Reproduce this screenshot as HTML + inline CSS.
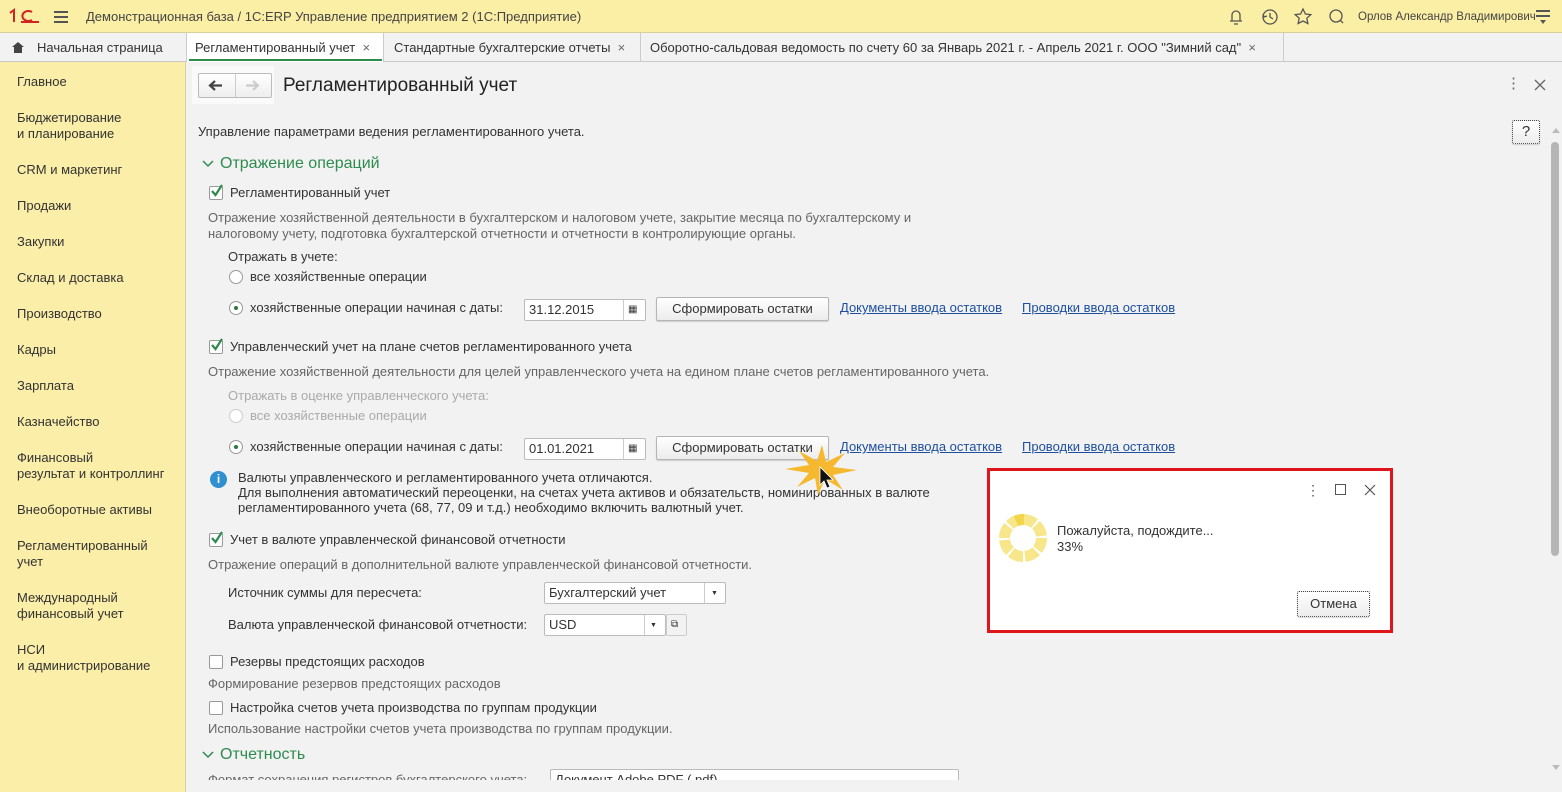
<!DOCTYPE html>
<html><head><meta charset="utf-8"><style>
*{margin:0;padding:0;box-sizing:border-box}
body{width:1562px;height:792px;overflow:hidden;position:relative;background:#f2f2f2;font-family:"Liberation Sans",Arial,sans-serif;font-size:13px;color:#333}
.a{position:absolute;white-space:nowrap;line-height:16px}
.g{color:#666}
.d{color:#aaa}
.l{color:#1d4f9e;text-decoration:underline}
.cb{position:absolute;width:14px;height:14px;border:1px solid #999;background:#fff;border-radius:2px}
.ck{position:absolute}
.rb{position:absolute;width:14px;height:14px;border:1px solid #999;border-radius:50%;background:#fff}
.rb.on:after{content:"";position:absolute;left:4px;top:4px;width:4px;height:4px;border-radius:50%;background:#2a7a3a}
.btn{position:absolute;background:linear-gradient(#fff,#ececec);border:1px solid #b5b5b5;border-radius:2px;box-shadow:0 1px 1px rgba(0,0,0,.15);text-align:center;line-height:22px;color:#333}
.inp{position:absolute;background:#fff;border:1px solid #bbb;border-radius:2px;height:22px;line-height:20px;padding-left:4px}
.side div{position:absolute;left:17px;line-height:16px;color:#333}
</style></head><body>
<!-- top bar -->
<div style="position:absolute;left:0;top:0;width:1562px;height:33px;background:#fbeea5;border-bottom:1px solid #d8cf9a"></div>
<svg style="position:absolute;left:8px;top:8px" width="32" height="16" fill="none" stroke="#d2231f" stroke-width="2"><path d="M2 5l4-3v12"/><path d="M24 4a6 5 0 1 0 0 8"/><path d="M13 14h18"/></svg>
<div style="position:absolute;left:54px;top:11px;width:14px;height:2px;background:#555;box-shadow:0 5px 0 #555,0 10px 0 #555"></div>
<div class="a" style="left:86px;top:9px;color:#444">Демонстрационная база / 1С:ERP Управление предприятием 2  (1С:Предприятие)</div>
<svg style="position:absolute;left:1225px;top:6px" width="120" height="22" fill="none" stroke="#555" stroke-width="1.3">
<path d="M5 15h12M7 15V9a4 4 0 0 1 8 0v6M9 18h4"/>
<circle cx="45" cy="11" r="7"/><path d="M45 7v4l3 2M38 8l1 3 3-1"/>
<path d="M78 3l2.4 5 5.4.6-4 3.6 1.1 5.3L78 15l-4.9 2.5 1.1-5.3-4-3.6 5.4-.6z"/>
<circle cx="111" cy="10" r="6"/><path d="M115 14l3 3"/>
</svg>
<div class="a" style="left:1358px;top:9px;font-size:11.5px;color:#444">Орлов Александр Владимирович</div>
<div style="position:absolute;left:1536px;top:10px;width:14px;height:1.5px;background:#555;box-shadow:0 5px 0 #555"></div>
<div style="position:absolute;left:1540px;top:20px;border:3px solid transparent;border-top:4px solid #555"></div>
<!-- tabs -->
<div style="position:absolute;left:0;top:33px;width:1562px;height:29px;background:#f2f2f2;border-bottom:1px solid #c8c8c8"></div>
<div style="position:absolute;left:12px;top:42px;border:6px solid transparent;border-bottom:5px solid #444;border-top:0"></div>
<div style="position:absolute;left:14px;top:47px;width:8px;height:6px;background:#444"></div>
<div class="a" style="left:37px;top:40px">Начальная страница</div>
<div style="position:absolute;left:186px;top:33px;width:198px;height:29px;background:#fff;border-left:1px solid #ccc;border-right:1px solid #ccc"></div>
<div style="position:absolute;left:189px;top:59px;width:193px;height:2px;background:#2e8b4e"></div>
<div class="a" style="left:195px;top:40px">Регламентированный учет <span style="color:#666">&nbsp;×</span></div>
<div class="a" style="left:394px;top:40px">Стандартные бухгалтерские отчеты <span style="color:#666">&nbsp;×</span></div>
<div style="position:absolute;left:640px;top:33px;width:1px;height:29px;background:#ccc"></div>
<div class="a" style="left:650px;top:40px">Оборотно-сальдовая ведомость по счету 60 за Январь 2021 г. - Апрель 2021 г. ООО "Зимний сад" <span style="color:#666">&nbsp;×</span></div>
<div style="position:absolute;left:1283px;top:33px;width:1px;height:29px;background:#ccc"></div>
<!-- sidebar -->
<div class="side" style="position:absolute;left:0;top:62px;width:186px;height:730px;background:#fbeea8;border-right:1px solid #d9d0a0">
<div style="top:12px">Главное</div>
<div style="top:48px">Бюджетирование<br>и планирование</div>
<div style="top:100px">CRM и маркетинг</div>
<div style="top:136px">Продажи</div>
<div style="top:172px">Закупки</div>
<div style="top:208px">Склад и доставка</div>
<div style="top:244px">Производство</div>
<div style="top:280px">Кадры</div>
<div style="top:316px">Зарплата</div>
<div style="top:352px">Казначейство</div>
<div style="top:388px">Финансовый<br>результат и контроллинг</div>
<div style="top:440px">Внеоборотные активы</div>
<div style="top:476px">Регламентированный<br>учет</div>
<div style="top:528px">Международный<br>финансовый учет</div>
<div style="top:580px">НСИ<br>и администрирование</div>
</div>
<!-- header -->
<div style="position:absolute;left:192px;top:66px;width:82px;height:38px;background:#fafafa"></div>
<div style="position:absolute;left:198px;top:73px;width:74px;height:25px;border:1px solid #bbb;border-radius:2px;background:linear-gradient(#fff,#eee)"></div>
<div style="position:absolute;left:235px;top:74px;width:1px;height:23px;background:#ccc"></div>
<svg style="position:absolute;left:198px;top:73px" width="74" height="25"><path d="M12 12.5h12M17 8l-5 4.5 5 4.5" fill="none" stroke="#444" stroke-width="2.2"/><path d="M48 12.5h12M55 8l5 4.5-5 4.5" fill="none" stroke="#ccc" stroke-width="2.2"/></svg>
<div class="a" style="left:283px;top:75px;font-size:19px;line-height:22px;color:#222">Регламентированный учет</div>
<div class="a" style="left:1506px;top:76px;font-size:15px;color:#666">⋮</div>
<svg style="position:absolute;left:1534px;top:79px" width="12" height="12" stroke="#666" stroke-width="1.3"><path d="M1 1l10 10M11 1L1 11"/></svg>
<div class="btn" style="left:1512px;top:120px;width:28px;height:24px;border:1px dotted #444;font-size:15px">?</div>
<!-- scrollbar -->
<div style="position:absolute;left:1552px;top:128px;border:4px solid transparent;border-bottom:5px solid #bbb;border-top:0"></div>
<div style="position:absolute;left:1551px;top:142px;width:8px;height:414px;background:#b5b5b5;border-radius:4px"></div>
<div style="position:absolute;left:1552px;top:765px;border:4px solid transparent;border-top:5px solid #bbb;border-bottom:0"></div>
<!-- content -->
<div class="a" style="left:198px;top:124px">Управление параметрами ведения регламентированного учета.</div>
<svg style="position:absolute;left:202px;top:160px" width="12" height="8"><path d="M1 1l5 5 5-5" fill="none" stroke="#2e8b4e" stroke-width="1.5"/></svg>
<div class="a" style="left:220px;top:155px;font-size:16px;color:#2e8b4e;line-height:18px">Отражение операций</div>

<div class="cb" style="left:209px;top:186px"></div><svg class="ck" style="left:210px;top:184px" width="14" height="14"><path d="M2 7l3.5 4L12 1" fill="none" stroke="#2e8b4e" stroke-width="2.2"/></svg>
<div class="a" style="left:230px;top:185px">Регламентированный учет</div>
<div class="a g" style="left:208px;top:210px">Отражение хозяйственной деятельности в бухгалтерском и налоговом учете, закрытие месяца по бухгалтерскому и<br>налоговому учету, подготовка бухгалтерской отчетности и отчетности в контролирующие органы.</div>
<div class="a" style="left:228px;top:249px">Отражать в учете:</div>
<div class="rb" style="left:229px;top:270px"></div><div class="a" style="left:250px;top:269px">все хозяйственные операции</div>
<div class="rb on" style="left:229px;top:301px"></div><div class="a" style="left:250px;top:300px">хозяйственные операции начиная с даты:</div>
<div class="inp" style="left:524px;top:299px;width:122px">31.12.2015</div><div style="position:absolute;left:623px;top:300px;width:1px;height:20px;background:#ccc"></div><div class="a" style="left:628px;top:302px;font-size:10px">▦</div>
<div class="btn" style="left:656px;top:297px;width:173px;height:24px">Сформировать остатки</div>
<div class="a l" style="left:840px;top:300px">Документы ввода остатков</div>
<div class="a l" style="left:1022px;top:300px">Проводки ввода остатков</div>

<div class="cb" style="left:209px;top:340px"></div><svg class="ck" style="left:210px;top:338px" width="14" height="14"><path d="M2 7l3.5 4L12 1" fill="none" stroke="#2e8b4e" stroke-width="2.2"/></svg>
<div class="a" style="left:230px;top:339px">Управленческий учет на плане счетов регламентированного учета</div>
<div class="a g" style="left:208px;top:364px">Отражение хозяйственной деятельности для целей управленческого учета на едином плане счетов регламентированного учета.</div>
<div class="a d" style="left:228px;top:388px">Отражать в оценке управленческого учета:</div>
<div class="rb" style="left:229px;top:409px;border-color:#ccc"></div><div class="a d" style="left:250px;top:408px">все хозяйственные операции</div>
<div class="rb on" style="left:229px;top:440px"></div><div class="a" style="left:250px;top:439px">хозяйственные операции начиная с даты:</div>
<div class="inp" style="left:524px;top:438px;width:122px">01.01.2021</div><div style="position:absolute;left:623px;top:439px;width:1px;height:20px;background:#ccc"></div><div class="a" style="left:628px;top:441px;font-size:10px">▦</div>
<div class="btn" style="left:656px;top:436px;width:173px;height:24px">Сформировать остатки</div>
<div class="a l" style="left:840px;top:439px">Документы ввода остатков</div>
<div class="a l" style="left:1022px;top:439px">Проводки ввода остатков</div>

<div style="position:absolute;left:210px;top:471px;width:17px;height:17px;border-radius:50%;background:#2f8fd0;color:#fff;font-weight:bold;font-size:12px;text-align:center;line-height:17px">i</div>
<div class="a" style="left:238px;top:470px;line-height:15px">Валюты управленческого и регламентированного учета отличаются.<br>Для выполнения автоматический переоценки, на счетах учета активов и обязательств, номинированных в валюте<br>регламентированного учета (68, 77, 09 и т.д.)  необходимо включить валютный учет.</div>

<div class="cb" style="left:209px;top:533px"></div><svg class="ck" style="left:210px;top:531px" width="14" height="14"><path d="M2 7l3.5 4L12 1" fill="none" stroke="#2e8b4e" stroke-width="2.2"/></svg>
<div class="a" style="left:230px;top:532px">Учет в валюте управленческой финансовой отчетности</div>
<div class="a g" style="left:208px;top:557px">Отражение операций в дополнительной валюте управленческой финансовой отчетности.</div>
<div class="a" style="left:228px;top:585px">Источник суммы для пересчета:</div>
<div class="inp" style="left:544px;top:582px;width:182px">Бухгалтерский учет</div><div style="position:absolute;left:704px;top:583px;width:1px;height:20px;background:#ccc"></div><div class="a" style="left:711px;top:586px;font-size:7px">▼</div>
<div class="a" style="left:228px;top:617px">Валюта управленческой финансовой отчетности:</div>
<div class="inp" style="left:544px;top:614px;width:122px">USD</div><div style="position:absolute;left:644px;top:615px;width:1px;height:20px;background:#ccc"></div><div class="a" style="left:650px;top:618px;font-size:7px">▼</div>
<div style="position:absolute;left:666px;top:614px;width:21px;height:22px;border:1px solid #ccc;border-radius:2px"></div><div class="a" style="left:671px;top:617px;font-size:10px">⧉</div>

<div class="cb" style="left:209px;top:655px"></div><div class="a" style="left:230px;top:654px">Резервы предстоящих расходов</div>
<div class="a g" style="left:208px;top:676px">Формирование резервов предстоящих расходов</div>
<div class="cb" style="left:209px;top:701px"></div><div class="a" style="left:230px;top:700px">Настройка счетов учета производства по группам продукции</div>
<div class="a g" style="left:208px;top:721px">Использование настройки счетов учета производства по группам продукции.</div>
<svg style="position:absolute;left:202px;top:751px" width="12" height="8"><path d="M1 1l5 5 5-5" fill="none" stroke="#2e8b4e" stroke-width="1.5"/></svg>
<div class="a" style="left:220px;top:746px;font-size:16px;color:#2e8b4e;line-height:18px">Отчетность</div>
<div class="a g" style="left:208px;top:772px;height:8px;overflow:hidden">Формат сохранения регистров бухгалтерского учета:</div>
<div class="inp" style="left:550px;top:769px;width:409px;height:22px">Документ Adobe PDF (.pdf)</div>
<div style="position:absolute;left:187px;top:780px;width:1375px;height:12px;background:#f2f2f2"></div>

<!-- cursor starburst -->
<svg style="position:absolute;left:785px;top:445px" width="75" height="50"><polygon points="37,0 41,17 60,8 48,22 72,25 48,30 58,45 40,34 33,50 30,33 12,42 24,28 0,24 24,20 14,6 32,16" fill="#f5b82e"/><path d="M35 22l0 18 4-4 3 7 3-1-3-7 6 0z" fill="#111" stroke="#fff" stroke-width=".8"/></svg>

<!-- dialog -->
<div style="position:absolute;left:987px;top:468px;width:406px;height:165px;border:3px solid #e0141b;background:#fff"></div>
<div class="a" style="left:1306px;top:482px;font-size:14px;color:#555">⋮</div>
<div style="position:absolute;left:1335px;top:484px;width:11px;height:11px;border:1.3px solid #555"></div>
<svg style="position:absolute;left:1364px;top:484px" width="12" height="12" stroke="#555" stroke-width="1.2"><path d="M1 1l10 10M11 1L1 11"/></svg>
<svg style="position:absolute;left:998px;top:513px" width="50" height="50"><circle cx="25" cy="25" r="18.5" fill="none" stroke="#f7e68a" stroke-width="11" stroke-dasharray="12.5 2"/><path d="M18 8 A18.5 18.5 0 0 1 26 6.5" stroke="#f3d54a" stroke-width="11" fill="none"/></svg>
<div class="a" style="left:1057px;top:523px">Пожалуйста, подождите...<br>33%</div>
<div class="btn" style="left:1297px;top:591px;width:73px;height:26px;border:1px dotted #444;line-height:24px">Отмена</div>
</body></html>
